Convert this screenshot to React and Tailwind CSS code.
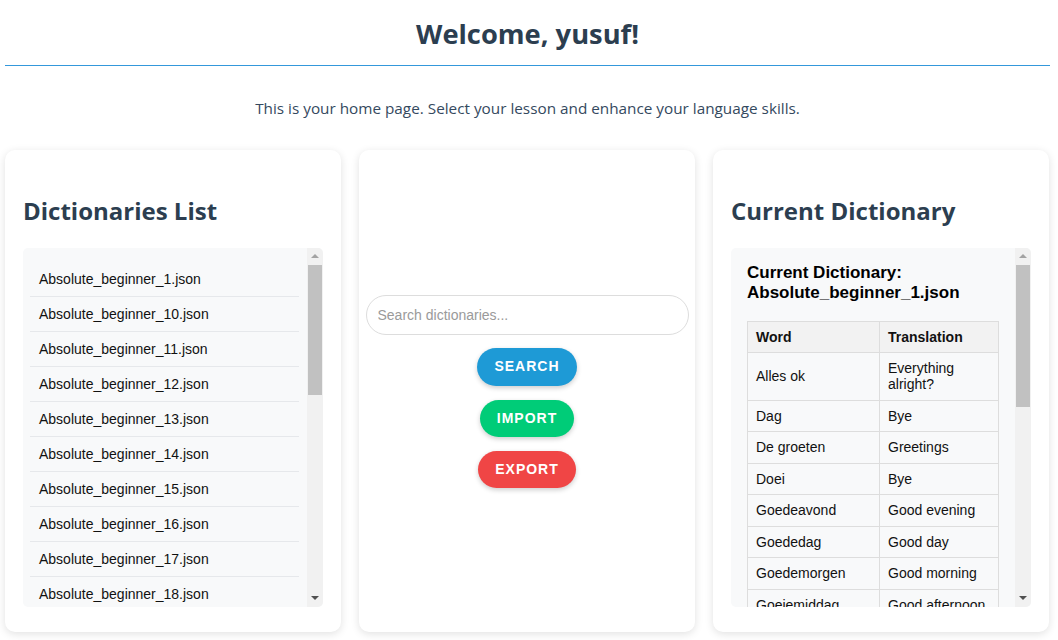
import React from 'react';

const files = [
  'Absolute_beginner_1.json',
  'Absolute_beginner_10.json',
  'Absolute_beginner_11.json',
  'Absolute_beginner_12.json',
  'Absolute_beginner_13.json',
  'Absolute_beginner_14.json',
  'Absolute_beginner_15.json',
  'Absolute_beginner_16.json',
  'Absolute_beginner_17.json',
  'Absolute_beginner_18.json',
  'Absolute_beginner_19.json',
  'Absolute_beginner_2.json',
];

const words = [
  ['Alles ok', 'Everything alright?'],
  ['Dag', 'Bye'],
  ['De groeten', 'Greetings'],
  ['Doei', 'Bye'],
  ['Goedeavond', 'Good evening'],
  ['Goededag', 'Good day'],
  ['Goedemorgen', 'Good morning'],
  ['Goeiemiddag', 'Good afternoon'],
  ['Goedenacht', 'Good night'],
  ['Hallo', 'Hello'],
];

// classic scrollbar look-alike, content is clipped
const FakeScrollbar = ({ thumb }) => (
  <div className="w-[16px] shrink-0 bg-[#f1f1f1] flex flex-col">
    <div className="h-[15px] flex items-center justify-center">
      <div className="w-0 h-0 border-l-[4px] border-r-[4px] border-b-[4px] border-l-transparent border-r-transparent border-b-[#a3a3a3]" />
    </div>
    <div className={`mt-[2px] mx-[1px] bg-[#c1c1c1] ${thumb}`} />
    <div className="flex-1" />
    <div className="h-[15px] flex items-center justify-center mb-[2px]">
      <div className="w-0 h-0 border-l-[4px] border-r-[4px] border-t-[4px] border-l-transparent border-r-transparent border-t-[#505050]" />
    </div>
  </div>
);

const Card = ({ children, className = '' }) => (
  <div className={`min-w-0 h-[482px] bg-white rounded-[10px] shadow-[0_2px_8px_rgba(0,0,0,0.12)] ${className}`}>
    {children}
  </div>
);

const CardTitle = ({ children }) => (
  <h2 className="mt-[27px] mb-[22px] text-[24px] leading-[31px] font-bold text-[#2c3e50] font-['Open_Sans',sans-serif]">
    {children}
  </h2>
);

export default function App() {
  return (
    <div className="w-[1058px] h-[640px] bg-white overflow-hidden pl-[5px] font-['Liberation_Sans',Arial,sans-serif]">
      {/* Header */}
      <div className="w-[1045px] border-b border-[#3498db] pt-[13px] pb-[11px] text-center">
        <h1 className="text-[27.3px] leading-[41px] font-bold text-[#2c3e50] font-['Open_Sans',sans-serif]">
          Welcome, yusuf!
        </h1>
      </div>
      <p className="w-[1045px] mt-[31px] text-center text-[15.3px] leading-[22px] text-[#34495e] font-['Open_Sans',sans-serif]">
        This is your home page. Select your lesson and enhance your language skills.
      </p>

      <div className="w-[1044px] mt-[31px] grid grid-cols-3 gap-[18px]">
        {/* Dictionaries list */}
        <Card className="pt-[18px] px-[18px]">
          <CardTitle>Dictionaries List</CardTitle>
          <div className="h-[359px] flex bg-[#f8f9fa] rounded-[5px] overflow-hidden">
            <ul className="flex-1 overflow-hidden pt-[14px] pl-[7px] pr-[8px]">
              {files.map((f) => (
                <li
                  key={f}
                  className="py-[9px] pl-[9px] text-[14px] leading-[16px] text-[#111] border-b border-[#e6e8eb]"
                >
                  {f}
                </li>
              ))}
            </ul>
            <FakeScrollbar thumb="h-[130px]" />
          </div>
        </Card>

        {/* Search + actions */}
        <Card className="flex flex-col items-center justify-center gap-[13px]">
          <input
            type="text"
            placeholder="Search dictionaries..."
            className="w-[323px] h-[40px] rounded-full border border-[#dddddd] px-[11px] text-[14px] text-[#333] placeholder:text-[#9a9a9a] outline-none font-['Liberation_Sans',Arial,sans-serif]"
          />
          <div className="flex flex-col items-center gap-[14px]">
            <button className="h-[38px] px-[17px] rounded-full bg-[#1e9ad6] text-white text-[14px] font-bold tracking-[1px] shadow-[0_2px_5px_rgba(0,0,0,0.2)]">
              SEARCH
            </button>
            <button className="h-[37px] px-[17px] rounded-full bg-[#00cc78] text-white text-[14px] font-bold tracking-[1px] shadow-[0_2px_5px_rgba(0,0,0,0.2)]">
              IMPORT
            </button>
            <button className="h-[37px] px-[17px] rounded-full bg-[#f04545] text-white text-[14px] font-bold tracking-[1px] shadow-[0_2px_5px_rgba(0,0,0,0.2)]">
              EXPORT
            </button>
          </div>
        </Card>

        {/* Current dictionary */}
        <Card className="pt-[18px] px-[18px]">
          <CardTitle>Current Dictionary</CardTitle>
          <div className="h-[359px] flex bg-[#f8f9fa] rounded-[5px] overflow-hidden">
            <div className="flex-1 overflow-hidden pt-[15px] px-[16px]">
              <h3 className="text-[17px] leading-[20px] font-bold text-black mb-[18px]">
                Current Dictionary:
                <br />
                Absolute_beginner_1.json
              </h3>
              <table className="w-full border-collapse text-[14px] leading-[16px] text-[#111]">
                <thead>
                  <tr>
                    <th className="w-[132px] bg-[#f2f2f2] border border-[#dddddd] p-[7px] pl-[8px] text-left font-bold">
                      Word
                    </th>
                    <th className="bg-[#f2f2f2] border border-[#dddddd] p-[7px] pl-[8px] text-left font-bold">
                      Translation
                    </th>
                  </tr>
                </thead>
                <tbody>
                  {words.map(([w, t]) => (
                    <tr key={w}>
                      <td className="border border-[#dddddd] px-[8px] py-[7.25px]">{w}</td>
                      <td className="border border-[#dddddd] px-[8px] py-[7.25px]">{t}</td>
                    </tr>
                  ))}
                </tbody>
              </table>
            </div>
            <FakeScrollbar thumb="h-[142px]" />
          </div>
        </Card>
      </div>
    </div>
  );
}
